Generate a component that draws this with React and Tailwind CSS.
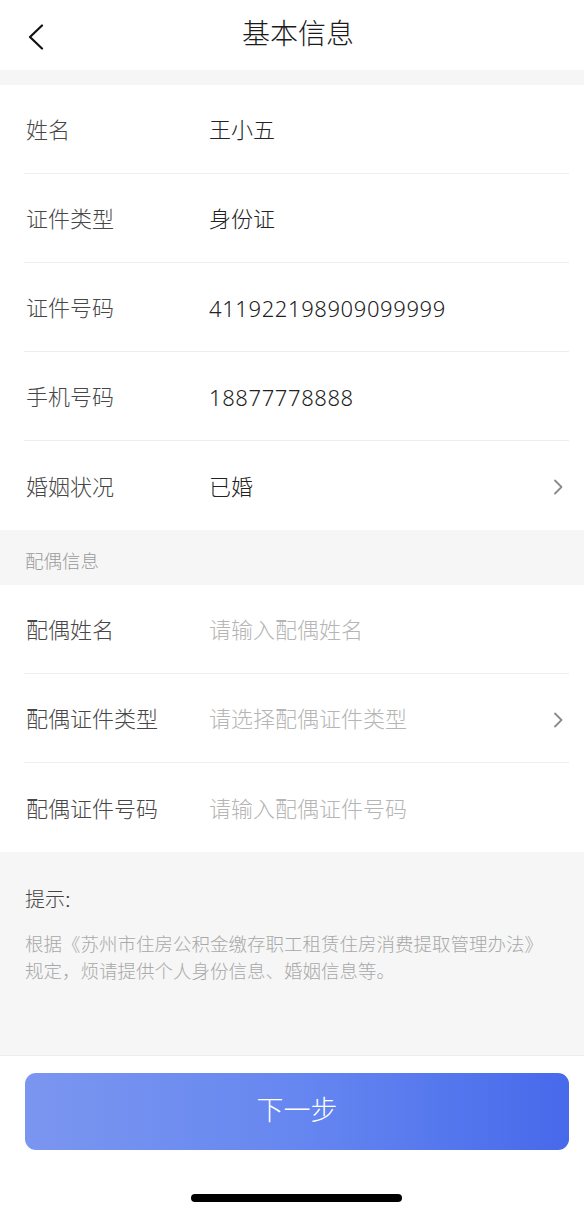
import React from 'react'

const font = { fontFamily: '"Liberation Sans", "Noto Sans CJK SC", sans-serif' }
const digitFont = { fontFamily: '"Noto Sans", "Liberation Sans", sans-serif' }

function Chevron() {
    return (
        <svg width="10" height="16" viewBox="0 0 10 16" fill="none">
            <path d="M2 1.5 L8.5 8 L2 14.5" stroke="#8a8a8a" strokeWidth="1.8" strokeLinecap="round" strokeLinejoin="round" />
        </svg>
    )
}

function Row({ label, value, placeholder, arrow, last, digits }) {
    return (
        <div className="bg-white pl-6 pr-[15px]">
            <div className={"flex h-[89px] items-center pt-[3px] pr-[6px] " + (last ? "" : "border-b border-[#eeeeee]")}>
                <div className="w-[185px] pl-[2px] text-[22px] font-light text-[#474747]">{label}</div>
                <div
                    className={"flex-1 text-[22px] font-light " + (value ? "text-[#222222] " : "text-[#b5b5b5] ") + (digits ? "tracking-[0.6px]" : "")}
                    style={digits ? digitFont : undefined}
                >
                    {value || placeholder}
                </div>
                {arrow && <Chevron />}
            </div>
        </div>
    )
}

export default function App() {
    return (
        <div className="w-[584px] min-h-[1215px] bg-white flex flex-col" style={font}>
            {/* nav bar */}
            <div className="relative flex h-[70px] items-center justify-center bg-white">
                <svg className="absolute left-[27px] top-[24px]" width="18" height="26" viewBox="0 0 18 26" fill="none">
                    <path d="M15 1.5 L3 13 L15 24.5" stroke="#111" strokeWidth="2.2" strokeLinecap="round" strokeLinejoin="round" />
                </svg>
                <h1 className="ml-[12px] text-[28px] font-light text-[#1a1a1a]">基本信息</h1>
            </div>
            <div className="h-[15px] bg-[#f6f6f6]" />

            <Row label="姓名" value="王小五" />
            <Row label="证件类型" value="身份证" />
            <Row label="证件号码" value="411922198909099999" digits />
            <Row label="手机号码" value="18877778888" digits />
            <Row label="婚姻状况" value="已婚" arrow last />

            <div className="flex h-[55px] items-center bg-[#f6f6f6] pl-[25px] pt-[8px] text-[18.5px] font-light text-[#9a9a9a]">
                配偶信息
            </div>

            <Row label="配偶姓名" placeholder="请输入配偶姓名" />
            <Row label="配偶证件类型" placeholder="请选择配偶证件类型" arrow />
            <Row label="配偶证件号码" placeholder="请输入配偶证件号码" last />

            <div className="h-[204px] bg-[#f6f6f6] px-[25px] pt-[34px] border-b border-[#ececec]">
                <p className="text-[20px] leading-[28px] font-light text-[#444444]">提示:</p>
                <p className="mt-[17px] text-[18.5px] leading-[27px] font-light text-[#a8a8a8]">
                    根据《苏州市住房公积金缴存职工租赁住房消费提取管理办法》规定，烦请提供个人身份信息、婚姻信息等。
                </p>
            </div>

            <div className="flex flex-col bg-white">
                <button className="ml-[25px] mt-[17px] flex h-[77px] w-[544px] items-center justify-center rounded-[11px] bg-gradient-to-r from-[#7b96f0] via-[#6687f0] to-[#4769eb] text-[27px] font-light text-white">
                    下一步
                </button>
                <div className="ml-[191px] mt-[44px] h-[8px] w-[211px] rounded-full bg-black" />
            </div>
        </div>
    )
}
